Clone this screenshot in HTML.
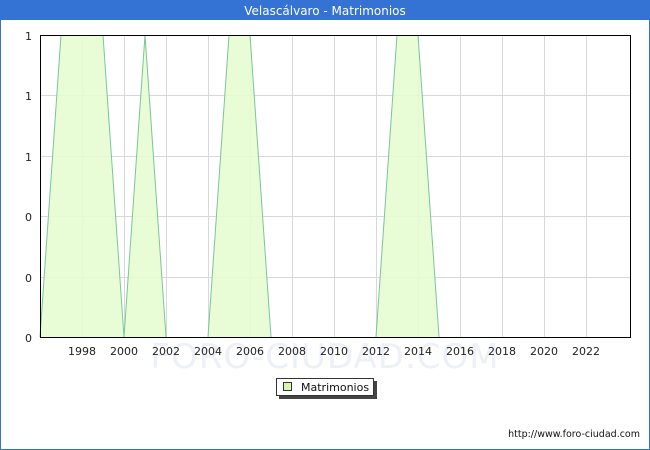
<!DOCTYPE html>
<html><head><style>
body{margin:0;background:#fff}
svg{display:block;font-family:"DejaVu Sans","Liberation Sans",sans-serif}
</style></head><body>
<svg width="650" height="450" viewBox="0 0 650 450">
<rect x="0.5" y="0.5" width="649" height="449" fill="#fff" stroke="#3473d4"/>
<rect x="0" y="0" width="650" height="20" fill="#3473d4"/>
<text x="325" y="15" fill="#fff" font-size="12" text-anchor="middle">Velascálvaro - Matrimonios</text>
<text x="325" y="368" fill="#eef0f8" font-size="34" text-anchor="middle" letter-spacing="1">FORO-CIUDAD.COM</text>
<g stroke="#d8d8d8" stroke-width="1">
<line x1="40" y1="95.5" x2="630" y2="95.5"/><line x1="40" y1="156.5" x2="630" y2="156.5"/>
<line x1="40" y1="216.5" x2="630" y2="216.5"/><line x1="40" y1="277.5" x2="630" y2="277.5"/>
<line x1="82.5" y1="35" x2="82.5" y2="337"/><line x1="124.5" y1="35" x2="124.5" y2="337"/>
<line x1="166.5" y1="35" x2="166.5" y2="337"/><line x1="208.5" y1="35" x2="208.5" y2="337"/>
<line x1="250.5" y1="35" x2="250.5" y2="337"/><line x1="292.5" y1="35" x2="292.5" y2="337"/>
<line x1="334.5" y1="35" x2="334.5" y2="337"/><line x1="376.5" y1="35" x2="376.5" y2="337"/>
<line x1="418.5" y1="35" x2="418.5" y2="337"/><line x1="460.5" y1="35" x2="460.5" y2="337"/>
<line x1="502.5" y1="35" x2="502.5" y2="337"/><line x1="544.5" y1="35" x2="544.5" y2="337"/>
<line x1="586.5" y1="35" x2="586.5" y2="337"/>
</g>
<polygon points="40,337 61,35 103,35 124,337 145,35 166,337 208,337 229,35 250,35 271,337 376,337 397,35 418,35 439,337" fill="#e5fdd0" fill-opacity="0.9"/>
<g stroke="#7cc49a" stroke-width="1" fill="none">
<polyline points="40,337 61,35"/><polyline points="103,35 124,337 145,35 166,337"/>
<polyline points="208,337 229,35"/><polyline points="250,35 271,337"/>
<polyline points="376,337 397,35"/><polyline points="418,35 439,337"/>
</g>
<rect x="40.5" y="35.5" width="590" height="302" fill="none" stroke="#000"/>
<g font-size="11" fill="#222" text-anchor="end">
<text x="32" y="40">1</text><text x="32" y="100">1</text><text x="32" y="161">1</text>
<text x="32" y="221">0</text><text x="32" y="282">0</text><text x="32" y="342">0</text>
</g>
<g font-size="11" fill="#222" text-anchor="middle">
<text x="82" y="355">1998</text><text x="124" y="355">2000</text><text x="166" y="355">2002</text>
<text x="208" y="355">2004</text><text x="250" y="355">2006</text><text x="292" y="355">2008</text>
<text x="334" y="355">2010</text><text x="376" y="355">2012</text><text x="418" y="355">2014</text>
<text x="460" y="355">2016</text><text x="502" y="355">2018</text><text x="544" y="355">2020</text>
<text x="586" y="355">2022</text>
</g>
<rect x="279" y="381" width="98" height="18" fill="#444"/>
<rect x="276.5" y="378.5" width="97" height="17" fill="#fff" stroke="#333"/>
<rect x="283.5" y="382.5" width="8" height="8" fill="#d6f7b0" stroke="#333"/>
<text x="301" y="391" font-size="11" fill="#111">Matrimonios</text>
<text x="640" y="437" font-size="9.5" fill="#111" text-anchor="end">http://www.foro-ciudad.com</text>
</svg>
</body></html>
